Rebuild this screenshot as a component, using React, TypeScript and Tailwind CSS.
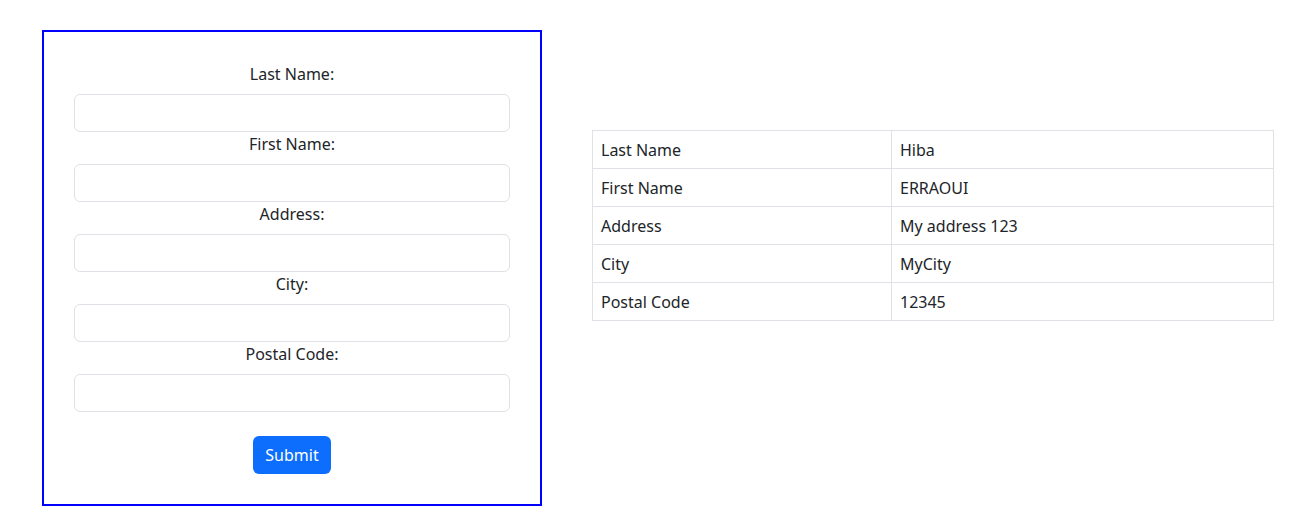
import { useState } from "react";

type Person = {
  lastName: string;
  firstName: string;
  address: string;
  city: string;
  postalCode: string;
};

const fields: { key: keyof Person; label: string }[] = [
  { key: "lastName", label: "Last Name" },
  { key: "firstName", label: "First Name" },
  { key: "address", label: "Address" },
  { key: "city", label: "City" },
  { key: "postalCode", label: "Postal Code" },
];

const App = () => {
  const [form, setForm] = useState<Person>({
    lastName: "",
    firstName: "",
    address: "",
    city: "",
    postalCode: "",
  });
  const [data, setData] = useState<Person>({
    lastName: "Hiba",
    firstName: "ERRAOUI",
    address: "My address 123",
    city: "MyCity",
    postalCode: "12345",
  });

  const handleSubmit = (e: React.FormEvent) => {
    e.preventDefault();
    setData(form);
  };

  return (
    <div
      className="flex items-start bg-white pl-[42px] pr-[32px] pt-[30px] text-[16px] text-[#212529]"
      style={{ fontFamily: '"Noto Sans", "Open Sans", sans-serif' }}
    >
      {/* Form */}
      <form
        onSubmit={handleSubmit}
        className="w-[500px] shrink-0 border-2 border-[#0000ff] px-[30px] pt-[30px] pb-[30px]"
      >
        {fields.map((f) => (
          <div key={f.key} className="flex flex-col items-center">
            <label className="mb-2 leading-6">{f.label}:</label>
            <input
              type="text"
              value={form[f.key]}
              onChange={(e) => setForm({ ...form, [f.key]: e.target.value })}
              className="h-[38px] w-full rounded-md border border-[#dee2e6] px-3 outline-none"
            />
          </div>
        ))}
        <div className="mt-6 flex justify-center">
          <button
            type="submit"
            className="h-[38px] rounded-md bg-[#0d6efd] px-3 leading-6 text-white hover:bg-[#0b5ed7]"
          >
            Submit
          </button>
        </div>
      </form>

      {/* Table */}
      <div className="ml-[50px] mt-[100px] flex-1">
        <table className="w-full border-collapse">
          <tbody>
            {fields.map((f) => (
              <tr key={f.key}>
                <td className="w-[299px] border border-[#dee2e6] px-2 pt-[7px] pb-[5px] leading-[25px]">
                  {f.label}
                </td>
                <td className="border border-[#dee2e6] px-2 pt-[7px] pb-[5px] leading-[25px]">
                  {data[f.key]}
                </td>
              </tr>
            ))}
          </tbody>
        </table>
      </div>
    </div>
  );
};

export default App;
